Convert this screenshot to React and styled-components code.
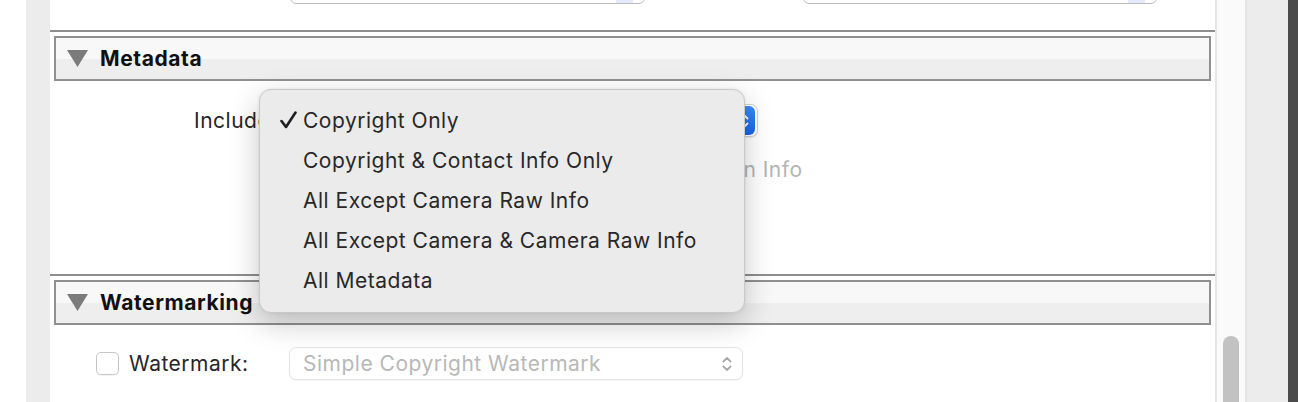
import React from 'react';
import styled, { createGlobalStyle } from 'styled-components';

const GlobalStyle = createGlobalStyle`
  html, body {
    margin: 0;
    padding: 0;
    overflow: hidden;
    background: #ffffff;
  }
`;

const menuItems = [
  'Copyright Only',
  'Copyright & Contact Info Only',
  'All Except Camera Raw Info',
  'All Except Camera & Camera Raw Info',
  'All Metadata',
];

function Triangle() {
  return (
    <svg width="21" height="17" viewBox="0 0 21 17">
      <polygon points="0,0 21,0 10.5,17" fill="#7b7b7b" />
    </svg>
  );
}

function Check() {
  return (
    <svg width="17" height="18" viewBox="0 0 17 18">
      <path d="M1.5 10 L6 16 L15.5 1.5" fill="none" stroke="#1e1e1e" strokeWidth="2.6" strokeLinecap="round" strokeLinejoin="round" />
    </svg>
  );
}

function Chevrons({ color }) {
  return (
    <svg width="10" height="16" viewBox="0 0 10 16">
      <path d="M1.5 5.5 L5 2 L8.5 5.5 M1.5 10.5 L5 14 L8.5 10.5" fill="none" stroke={color} strokeWidth="1.8" strokeLinecap="round" strokeLinejoin="round" />
    </svg>
  );
}

function Section({ title, children, height }) {
  return (
    <SectionWrap>
      <Rule />
      <HeaderBox>
        <Triangle />
        <HeaderTitle>{title}</HeaderTitle>
      </HeaderBox>
      <SectionBody $height={height}>{children}</SectionBody>
    </SectionWrap>
  );
}

export default function App() {
  return (
    <>
      <GlobalStyle />
      <Window>
        <Gutter />
        <SideRail />
        <Content>
          <TopStrip>
            <ClippedRow>
              <FieldStub $left={240} $width={355} />
              <FieldStub $left={158} $width={354} />
            </ClippedRow>
          </TopStrip>

          <Section title="Metadata" height={193}>
            <FormRow>
              <Label>Include:</Label>
              <PopupButton>
                <PopupText>All Metadata</PopupText>
                <BlueArrow>
                  <Chevrons color="#ffffff" />
                </BlueArrow>
              </PopupButton>
            </FormRow>
            <CheckRow>
              <CheckItem>
                <CheckBox $disabled />
                <DimText>Remove Person Info</DimText>
              </CheckItem>
              <CheckItem>
                <CheckBox $disabled />
                <DimText>Remove Location Info</DimText>
              </CheckItem>
            </CheckRow>
          </Section>

          <Section title="Watermarking">
            <WatermarkRow>
              <CheckBox />
              <RowLabel>Watermark:</RowLabel>
              <DisabledPopup>
                <DisabledText>Simple Copyright Watermark</DisabledText>
                <Chevrons color="#a9a9a9" />
              </DisabledPopup>
            </WatermarkRow>
          </Section>

          <Menu>
            {menuItems.map((item, i) => (
              <MenuItem key={item}>
                <CheckSlot>{i === 0 && <Check />}</CheckSlot>
                <span>{item}</span>
              </MenuItem>
            ))}
          </Menu>
        </Content>
        <ScrollTrack>
          <Thumb />
        </ScrollTrack>
        <OuterPane />
        <DarkEdge />
      </Window>
    </>
  );
}

const Window = styled.div`
  display: flex;
  width: 1298px;
  height: 402px;
  overflow: hidden;
  font-family: Inter, "Liberation Sans", sans-serif;
`;

const Gutter = styled.div`
  width: 26px;
  background: #ffffff;
`;

const SideRail = styled.div`
  width: 24px;
  background: #ececec;
`;

const Content = styled.div`
  position: relative;
  width: 1165px;
  background: #ffffff;
  display: flex;
  flex-direction: column;
`;

const TopStrip = styled.div`
  height: 30px;
`;

const ClippedRow = styled.div`
  height: 4px;
  overflow: hidden;
  display: flex;
  align-items: flex-end;
`;

const FieldStub = styled.div`
  flex: none;
  margin-left: ${(p) => p.$left}px;
  width: ${(p) => p.$width}px;
  height: 30px;
  box-sizing: border-box;
  border: 1px solid #bdbdbd;
  border-radius: 6px;
  background: linear-gradient(to right, #ffffff 92%, #e3e9fb 92%, #e3e9fb 97%, #ffffff 97%);
`;

const SectionWrap = styled.div`
  display: flex;
  flex-direction: column;
`;

const Rule = styled.div`
  height: 2px;
  background: #8e8e8e;
`;

const HeaderBox = styled.div`
  margin: 4px 4px 0 4px;
  height: 45px;
  box-sizing: border-box;
  border: 2px solid #909090;
  background: linear-gradient(to bottom, #f8f8f8 50%, #eeeeee 50%);
  display: flex;
  align-items: center;
  padding-left: 11px;
  gap: 12px;
`;

const HeaderTitle = styled.span`
  font-weight: 700;
  font-size: 21px;
  letter-spacing: 0.6px;
  color: #111111;
`;

const SectionBody = styled.div`
  height: ${(p) => (p.$height ? `${p.$height}px` : 'auto')};
  display: flex;
  flex-direction: column;
`;

const FormRow = styled.div`
  display: flex;
  align-items: center;
  margin-top: 23px;
  padding-left: 144px;
  gap: 8px;
`;

const Label = styled.span`
  font-size: 21px;
  letter-spacing: 0.5px;
  color: #262626;
  width: 88px;
`;

const PopupButton = styled.div`
  width: 468px;
  height: 33px;
  box-sizing: border-box;
  border: 1px solid #d2d2d2;
  border-radius: 7px;
  background: #ffffff;
  box-shadow: 0 1px 1px rgba(0, 0, 0, 0.08);
  display: flex;
  align-items: center;
  justify-content: space-between;
  padding: 0 2px 0 13px;
`;

const PopupText = styled.span`
  font-size: 21px;
  letter-spacing: 0.5px;
  color: #262626;
`;

const BlueArrow = styled.div`
  width: 22px;
  height: 29px;
  border-radius: 6px;
  background: linear-gradient(to bottom, #3b8af5, #1766e6);
  display: flex;
  align-items: center;
  justify-content: center;
`;

const CheckRow = styled.div`
  display: flex;
  align-items: center;
  margin-top: 20px;
  padding-left: 224px;
  gap: 30px;
`;

const CheckItem = styled.div`
  display: flex;
  align-items: center;
  gap: 10px;
`;

const CheckBox = styled.div`
  width: 23px;
  height: 23px;
  box-sizing: border-box;
  border: 1px solid ${(p) => (p.$disabled ? '#e0e0e0' : '#c6c6c6')};
  border-radius: 5px;
  background: #ffffff;
  box-shadow: 0 1px 1px rgba(0, 0, 0, 0.05);
`;

const DimText = styled.span`
  font-size: 21px;
  letter-spacing: 0.5px;
  color: #b4b4b4;
`;

const WatermarkRow = styled.div`
  display: flex;
  align-items: center;
  margin-top: 22px;
  padding-left: 46px;
`;

const RowLabel = styled.span`
  font-size: 21px;
  letter-spacing: 0.5px;
  color: #262626;
  margin-left: 10px;
  width: 160px;
`;

const DisabledPopup = styled.div`
  width: 454px;
  height: 33px;
  box-sizing: border-box;
  border: 1px solid #e3e3e3;
  border-radius: 7px;
  background: #ffffff;
  box-shadow: 0 1px 1px rgba(0, 0, 0, 0.04);
  display: flex;
  align-items: center;
  justify-content: space-between;
  padding: 0 10px 0 13px;
`;

const DisabledText = styled.span`
  font-size: 21px;
  letter-spacing: 0.5px;
  color: #b8b8b8;
`;

const Menu = styled.div`
  position: absolute;
  left: 209px;
  top: 89px;
  width: 486px;
  box-sizing: border-box;
  padding: 10px 0 12px;
  background: #ebebeb;
  border: 1px solid #c9c9c9;
  border-radius: 12px;
  box-shadow: 0 10px 30px rgba(0, 0, 0, 0.22), 0 0 3px rgba(0, 0, 0, 0.08);
`;

const MenuItem = styled.div`
  height: 40px;
  display: flex;
  align-items: center;
  font-size: 21px;
  letter-spacing: 0.5px;
  color: #282828;
`;

const CheckSlot = styled.div`
  width: 43px;
  display: flex;
  justify-content: flex-end;
  padding-right: 6px;
  box-sizing: border-box;
`;

const ScrollTrack = styled.div`
  width: 32px;
  box-sizing: border-box;
  background: #fafafa;
  border-left: 2px solid #e6e6e6;
  border-right: 2px solid #e4e4e4;
  padding-top: 336px;
  display: flex;
  justify-content: center;
`;

const Thumb = styled.div`
  width: 16px;
  height: 120px;
  border-radius: 8px;
  background: #c2c2c2;
`;

const OuterPane = styled.div`
  width: 41px;
  background: #ececec;
`;

const DarkEdge = styled.div`
  width: 10px;
  background: #4b4b4b;
`;
